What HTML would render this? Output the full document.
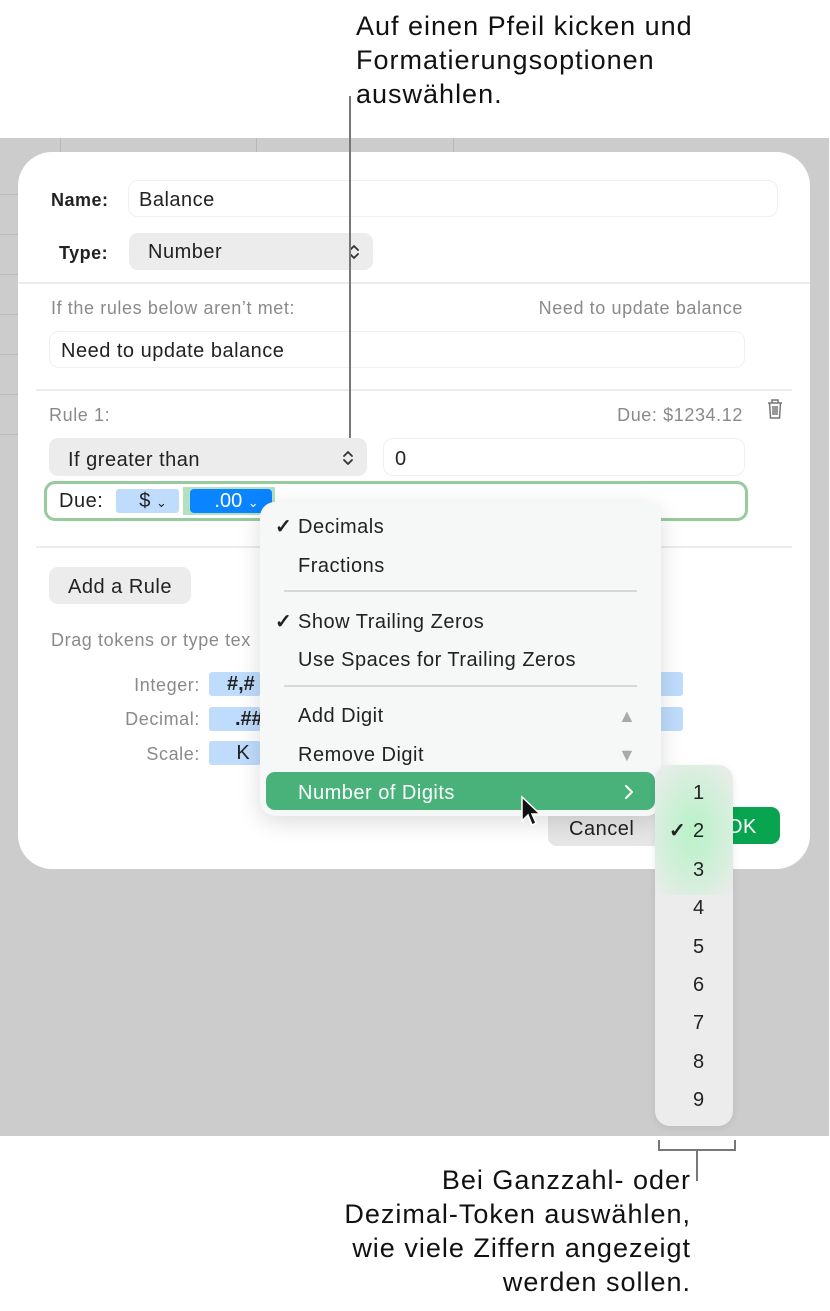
<!DOCTYPE html>
<html><head><meta charset="utf-8">
<style>
*{margin:0;padding:0;box-sizing:border-box}
body{width:830px;height:1311px;background:#fff;position:relative;overflow:hidden;font-family:"Liberation Sans",sans-serif;color:#222}
.a{position:absolute}
.t{position:absolute;white-space:nowrap;line-height:24px;font-size:20px;letter-spacing:.5px;margin-top:1px}
.g{color:#8a8a8a;font-size:18px;letter-spacing:.6px}
.ann{position:absolute;font-size:27px;letter-spacing:1px;line-height:34px;color:#111;white-space:nowrap}
.box{position:absolute;border:1.5px solid #efefef;border-radius:10px;background:#fff}
.pop{position:absolute;background:#ececec;border-radius:9px}
.tok{position:absolute;background:#bfdcfd;border-radius:3px;text-align:center;font-size:20px;line-height:24px}
.sep{position:absolute;height:2px;background:#ececec}
.ck{font-weight:bold}
</style></head><body>

<div class="ann" style="left:356px;top:9px">Auf einen Pfeil kicken und<br>Formatierungsoptionen<br>auswählen.</div>

<div class="a" style="left:0;top:138px;width:829px;height:998px;background:#cccccc"></div>
<div class="a" style="left:60px;top:138px;width:1px;height:14px;background:#b8b8b8"></div>
<div class="a" style="left:256px;top:138px;width:1px;height:14px;background:#b8b8b8"></div>
<div class="a" style="left:453px;top:138px;width:1px;height:14px;background:#b8b8b8"></div>
<div class="a" style="left:0;top:194px;width:18px;height:1px;background:#bbb"></div>
<div class="a" style="left:0;top:234px;width:18px;height:1px;background:#bbb"></div>
<div class="a" style="left:0;top:274px;width:18px;height:1px;background:#bbb"></div>
<div class="a" style="left:0;top:314px;width:18px;height:1px;background:#bbb"></div>
<div class="a" style="left:0;top:354px;width:18px;height:1px;background:#bbb"></div>
<div class="a" style="left:0;top:394px;width:18px;height:1px;background:#bbb"></div>
<div class="a" style="left:0;top:434px;width:18px;height:1px;background:#bbb"></div>

<div class="a" style="left:18px;top:152px;width:792px;height:717px;background:#fff;border-radius:34px"></div>

<div class="t" style="left:51px;top:187px;font-weight:bold;font-size:18px">Name:</div>
<div class="box" style="left:128px;top:180px;width:650px;height:37px"></div>
<div class="t" style="left:139px;top:187px">Balance</div>

<div class="t" style="left:59px;top:240px;font-weight:bold;font-size:18px">Type:</div>
<div class="pop" style="left:129px;top:233px;width:244px;height:37px"></div>
<div class="t" style="left:148px;top:239px">Number</div>
<svg class="a" style="left:347px;top:242px" width="14" height="20" viewBox="0 0 14 20"><path d="M3 8 L7 4 L11 8 M3 12 L7 16 L11 12" fill="none" stroke="#333" stroke-width="1.8" stroke-linecap="round" stroke-linejoin="round"/></svg>

<div class="sep" style="left:18px;top:282px;width:792px"></div>

<div class="t g" style="left:51px;top:295px">If the rules below aren’t met:</div>
<div class="t g" style="right:87px;top:295px">Need to update balance</div>
<div class="box" style="left:49px;top:331px;width:696px;height:37px"></div>
<div class="t" style="left:61px;top:338px">Need to update balance</div>

<div class="sep" style="left:36px;top:389px;width:756px"></div>

<div class="t g" style="left:49px;top:402px">Rule 1:</div>
<div class="t g" style="right:87px;top:402px">Due: $1234.12</div>
<svg class="a" style="left:764px;top:396px" width="22" height="26" viewBox="0 0 22 26"><path d="M4 7 H18 M8 7 V4 H14 V7 M5.5 7 L6.5 22 H15.5 L16.5 7 M9 10 V19 M11 10 V19 M13 10 V19" fill="none" stroke="#777" stroke-width="1.5"/></svg>

<div class="pop" style="left:49px;top:438px;width:318px;height:38px"></div>
<div class="t" style="left:68px;top:447px">If greater than</div>
<svg class="a" style="left:341px;top:448px" width="14" height="20" viewBox="0 0 14 20"><path d="M3 8 L7 4 L11 8 M3 12 L7 16 L11 12" fill="none" stroke="#333" stroke-width="1.8" stroke-linecap="round" stroke-linejoin="round"/></svg>
<div class="box" style="left:383px;top:438px;width:362px;height:38px"></div>
<div class="t" style="left:395px;top:446px">0</div>

<div class="a" style="left:349px;top:96px;width:2px;height:342px;background:#777"></div>

<div class="a" style="left:44px;top:481px;width:704px;height:40px;border:3px solid #97cb9d;border-radius:11px"></div>
<div class="t" style="left:59px;top:488px">Due:</div>
<div class="tok" style="left:116px;top:489px;width:63px;height:24px">&nbsp;&nbsp;$ <span style="font-size:13px">⌄</span></div>
<div class="a" style="left:183px;top:487px;width:92px;height:28px;background:#b5e0c0"></div>
<div class="tok" style="left:190px;top:489px;width:82px;height:24px;background:#0a84ff;color:#fff;border-radius:4px">&nbsp;&nbsp;.00 <span style="font-size:13px">⌄</span></div>

<div class="sep" style="left:36px;top:546px;width:756px"></div>

<div class="pop" style="left:49px;top:567px;width:142px;height:37px"></div>
<div class="t" style="left:68px;top:574px">Add a Rule</div>

<div class="t g" style="left:51px;top:627px">Drag tokens or type tex</div>
<div class="t g" style="right:630px;top:672px">Integer:</div>
<div class="t g" style="right:630px;top:706px">Decimal:</div>
<div class="t g" style="right:630px;top:741px">Scale:</div>
<div class="tok" style="left:209px;top:672px;width:52px;height:24px;font-weight:bold;padding-left:18px;text-align:left">#,#</div>
<div class="tok" style="left:209px;top:707px;width:52px;height:24px;font-weight:bold;padding-left:26px;text-align:left">.##</div>
<div class="tok" style="left:209px;top:741px;width:52px;height:24px;padding-left:16px">K</div>
<div class="tok" style="left:658px;top:672px;width:25px;height:24px"></div>
<div class="tok" style="left:658px;top:707px;width:25px;height:24px"></div>

<div class="a" style="left:548px;top:808px;width:175px;height:38px;background:#e6e6e6;border-radius:9px"></div>
<div class="t" style="left:569px;top:816px">Cancel</div>
<div class="a" style="left:700px;top:807px;width:80px;height:37px;background:#08a450;border-radius:9px"></div>
<div class="t" style="left:727px;top:814px;color:#fff">OK</div>

<div class="a" style="left:260px;top:502px;width:401px;height:314px;background:#f6f7f7;border-radius:15px;box-shadow:0 6px 24px rgba(0,0,0,.14)"></div>
<div class="t ck" style="left:275px;top:514px">✓</div>
<div class="t" style="left:298px;top:514px">Decimals</div>
<div class="t" style="left:298px;top:553px">Fractions</div>
<div class="a" style="left:284px;top:590px;width:353px;height:1.5px;background:#d8d8d8"></div>
<div class="t ck" style="left:275px;top:609px">✓</div>
<div class="t" style="left:298px;top:609px">Show Trailing Zeros</div>
<div class="t" style="left:298px;top:647px">Use Spaces for Trailing Zeros</div>
<div class="a" style="left:284px;top:685px;width:353px;height:1.5px;background:#d8d8d8"></div>
<div class="t" style="left:298px;top:703px">Add Digit</div>
<div class="t" style="left:618px;top:703px;color:#aaa;font-size:18px">▲</div>
<div class="t" style="left:298px;top:742px">Remove Digit</div>
<div class="t" style="left:618px;top:742px;color:#aaa;font-size:18px">▼</div>
<div class="a" style="left:266px;top:772px;width:389px;height:38px;background:#48b27a;border-radius:9px"></div>
<div class="t" style="left:298px;top:780px;color:#fff">Number of Digits</div>
<svg class="a" style="left:623px;top:783px" width="12" height="18" viewBox="0 0 12 18"><path d="M3 3 L9 9 L3 15" fill="none" stroke="#fff" stroke-width="2" stroke-linecap="round" stroke-linejoin="round"/></svg>

<svg class="a" style="left:520px;top:795px" width="24" height="36" viewBox="0 0 24 36"><path d="M2 2 L2 26 L8 20 L12 30 L16 28 L12 19 L20 19 Z" fill="#111" stroke="#fff" stroke-width="1.5"/></svg>

<div class="a" style="left:655px;top:765px;width:78px;height:361px;background:#ececec;border-radius:15px;overflow:hidden;box-shadow:0 2px 8px rgba(0,0,0,.08)">
<div class="a" style="left:-10px;top:-10px;width:98px;height:140px;background:radial-gradient(ellipse at 50% 55%,#b8f2c8 0%,rgba(200,240,210,.7) 45%,rgba(236,236,236,0) 80%)"></div>
</div>
<div class="t" style="left:693px;top:780px">1</div>
<div class="t ck" style="left:669px;top:818px">✓</div>
<div class="t" style="left:693px;top:818px">2</div>
<div class="t" style="left:693px;top:857px">3</div>
<div class="t" style="left:693px;top:895px">4</div>
<div class="t" style="left:693px;top:934px">5</div>
<div class="t" style="left:693px;top:972px">6</div>
<div class="t" style="left:693px;top:1010px">7</div>
<div class="t" style="left:693px;top:1049px">8</div>
<div class="t" style="left:693px;top:1087px">9</div>

<div class="a" style="left:658px;top:1140px;width:78px;height:11px;border:2px solid #777;border-top:none"></div>
<div class="a" style="left:696px;top:1150px;width:2px;height:31px;background:#777"></div>

<div class="ann" style="right:139px;top:1163px;text-align:right">Bei Ganzzahl- oder<br>Dezimal-Token auswählen,<br>wie viele Ziffern angezeigt<br>werden sollen.</div>
</body></html>
